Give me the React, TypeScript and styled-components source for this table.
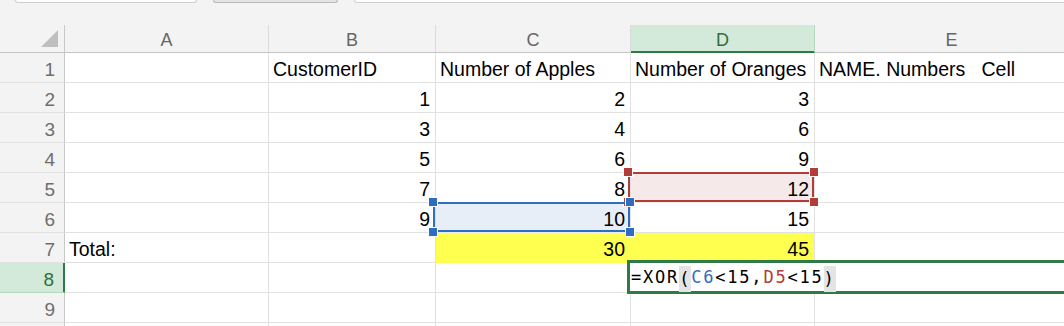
import React from "react";
import styled, { createGlobalStyle } from "styled-components";

const GlobalStyle = createGlobalStyle`
  html, body {
    margin: 0;
    padding: 0;
    background: #f3f3f3;
    overflow: hidden;
  }
  body {
    font-family: "Liberation Sans", Arial, sans-serif;
  }
`;

const Page = styled.div`
  width: 1064px;
  height: 326px;
  overflow: hidden;
  display: flex;
  flex-direction: column;
  background: #f3f3f3;
`;

/* remains of the formula bar, scrolled mostly out of view */
const FormulaBar = styled.div`
  height: 25px;
  flex: none;
  display: flex;
  align-items: flex-start;
  padding-left: 15px;
  gap: 16px;
`;

const BarField = styled.div<{ $w: number; $pressed?: boolean }>`
  width: ${(p) => p.$w}px;
  height: 2px;
  flex: none;
  background: ${(p) => (p.$pressed ? "#e4e4e4" : "#ffffff")};
  border: 1px solid ${(p) => (p.$pressed ? "#b9b9b9" : "#cfcfcf")};
  border-top: none;
  border-radius: 0 0 5px 5px;
`;

const Grid = styled.div`
  display: grid;
  grid-template-columns: 65px 204px 167px 195px 184px 274px;
  grid-auto-rows: 30px;
  grid-template-rows: 28px;
  background: #ffffff;
`;

const Corner = styled.div`
  background: #f3f3f3;
  border-right: 1px solid #c8c8c8;
  border-bottom: 1px solid #c4c4c4;
  position: relative;
`;

const CornerMark = styled.div`
  position: absolute;
  right: 6px;
  bottom: 5px;
  width: 0;
  height: 0;
  border-style: solid;
  border-width: 0 0 17px 17px;
  border-color: transparent transparent #bfbfbf transparent;
`;

const ColHead = styled.div<{ $active?: boolean }>`
  box-sizing: border-box;
  display: flex;
  align-items: center;
  justify-content: center;
  padding-top: 4px;
  font-size: 18px;
  color: ${(p) => (p.$active ? "#2f6e3f" : "#666666")};
  background: ${(p) => (p.$active ? "#d3eadb" : "#f3f3f3")};
  border-right: 1px solid ${(p) => (p.$active ? "#b3d9bf" : "#dadada")};
  border-bottom: ${(p) => (p.$active ? "3px solid #2f7a45" : "1px solid #c4c4c4")};
  margin-bottom: ${(p) => (p.$active ? "-1px" : "0")};
`;

const RowHead = styled.div<{ $active?: boolean }>`
  box-sizing: border-box;
  display: flex;
  align-items: center;
  justify-content: flex-end;
  padding: 4px 9px 0 0;
  font-size: 19px;
  color: ${(p) => (p.$active ? "#2f6e3f" : "#6e6e6e")};
  background: ${(p) => (p.$active ? "#d3eadb" : "#f3f3f3")};
  border-right: ${(p) => (p.$active ? "3px solid #2f7a45" : "1px solid #c8c8c8")};
  border-bottom: 1px solid ${(p) => (p.$active ? "#b3d9bf" : "#e1e1e1")};
  margin-right: ${(p) => (p.$active ? "-1px" : "0")};
`;

const Cell = styled.div<{ $num?: boolean; $fill?: string; $joinRight?: boolean }>`
  position: relative;
  box-sizing: border-box;
  display: flex;
  align-items: center;
  justify-content: ${(p) => (p.$num ? "flex-end" : "flex-start")};
  padding: 4px ${(p) => (p.$num ? "5px" : "0")} 0 ${(p) => (p.$num ? "0" : "4px")};
  font-size: 19.5px;
  color: #000000;
  white-space: pre;
  background: ${(p) => p.$fill || "#ffffff"};
  border-right: 1px solid ${(p) => (p.$joinRight && p.$fill ? p.$fill : "#e1e1e1")};
  border-bottom: 1px solid ${(p) => p.$fill || "#e1e1e1"};
`;

const CellText = styled.span`
  position: relative;
  z-index: 1;
`;

/* coloured outline of a range that a formula points to */
const RangeBox = styled.div<{ $color: string }>`
  position: absolute;
  left: -3px;
  top: -1px;
  right: 0;
  bottom: 0;
  border: 2px solid ${(p) => p.$color};
  z-index: 2;
  pointer-events: none;
`;

const Handle = styled.div<{ $color: string; $x: "l" | "r"; $y: "t" | "b" }>`
  position: absolute;
  width: 8px;
  height: 8px;
  background: ${(p) => p.$color};
  border: 1px solid #ffffff;
  ${(p) => (p.$x === "l" ? "left: -7px;" : "right: -7px;")}
  ${(p) => (p.$y === "t" ? "top: -7px;" : "bottom: -7px;")}
`;

const Editor = styled.div`
  position: absolute;
  left: -4px;
  top: -3px;
  width: 460px;
  height: 28px;
  border: 3px solid #2f7a45;
  background: #ffffff;
  z-index: 3;
  display: flex;
  align-items: center;
  padding-left: 1px;
  font-family: "DejaVu Sans Mono", "Liberation Mono", monospace;
  font-size: 17px;
  letter-spacing: 1.8px;
  color: #000000;
  white-space: pre;
`;

const Ref = styled.span<{ $color: string }>`
  color: ${(p) => p.$color};
`;

const Paren = styled.span`
  display: inline-block;
  background: #e4e4e4;
  line-height: 26px;
  margin-top: 4px;
`;

const BLUE = "#2f6ebf";
const RED = "#b03d38";
const YELLOW = "#ffff50";

type Mark = "blue" | "red";

const Range: React.FC<{ color: string }> = ({ color }) => (
  <RangeBox $color={color}>
    <Handle $color={color} $x="l" $y="t" />
    <Handle $color={color} $x="r" $y="t" />
    <Handle $color={color} $x="l" $y="b" />
    <Handle $color={color} $x="r" $y="b" />
  </RangeBox>
);

interface Row {
  a?: string;
  b?: number;
  c?: number;
  d?: number;
  e?: string;
}

const rows: Row[] = [
  { e: "NAME. Numbers   Cell" },
  { b: 1, c: 2, d: 3 },
  { b: 3, c: 4, d: 6 },
  { b: 5, c: 6, d: 9 },
  { b: 7, c: 8, d: 12 },
  { b: 9, c: 10, d: 15 },
  { a: "Total:", c: 30, d: 45 },
  {},
  {},
];

const marks: Record<string, Mark> = { C6: "blue", D5: "red" };
const fills: Record<string, string> = { C7: YELLOW, D7: YELLOW };

const App: React.FC = () => {
  const renderNum = (col: string, r: number, v?: number) => {
    const key = `${col}${r}`;
    const mark = marks[key];
    const fill = mark === "blue" ? "#e8eef8" : mark === "red" ? "#f6e9e9" : fills[key];
    return (
      <Cell key={key} $num $fill={fill} $joinRight={key === "C7"}>
        {v !== undefined && <CellText>{v}</CellText>}
        {mark && <Range color={mark === "blue" ? BLUE : RED} />}
        {key === "D8" && (
          <Editor>
            =XOR<Paren>(</Paren>
            <Ref $color={BLUE}>C6</Ref>&lt;15,<Ref $color={RED}>D5</Ref>&lt;15<Paren>)</Paren>
          </Editor>
        )}
      </Cell>
    );
  };

  return (
    <Page>
      <GlobalStyle />
      <FormulaBar>
        <BarField $w={180} />
        <BarField $w={123} $pressed />
        <BarField $w={720} />
      </FormulaBar>
      <Grid>
        <Corner>
          <CornerMark />
        </Corner>
        <ColHead>A</ColHead>
        <ColHead>B</ColHead>
        <ColHead>C</ColHead>
        <ColHead $active>D</ColHead>
        <ColHead>E</ColHead>
        {rows.map((row, i) => {
          const r = i + 1;
          return (
            <React.Fragment key={r}>
              <RowHead $active={r === 8}>{r}</RowHead>
              <Cell>{row.a}</Cell>
              {r === 1 ? <Cell>CustomerID</Cell> : renderNum("B", r, row.b)}
              {r === 1 ? <Cell>Number of Apples</Cell> : renderNum("C", r, row.c)}
              {r === 1 ? <Cell>Number of Oranges</Cell> : renderNum("D", r, row.d)}
              <Cell>{row.e}</Cell>
            </React.Fragment>
          );
        })}
        {/* next row, only its top edge shows */}
        <RowHead />
        <Cell />
        <Cell />
        <Cell />
        <Cell />
        <Cell />
      </Grid>
    </Page>
  );
};

export default App;
